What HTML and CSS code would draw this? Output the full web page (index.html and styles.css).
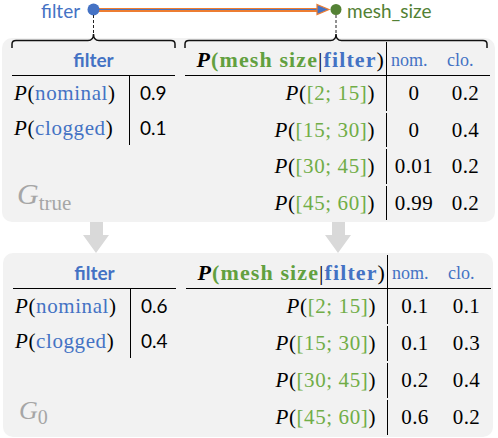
FILE: index.html
```html
<!DOCTYPE html>
<html>
<head>
<meta charset="utf-8">
<link rel="stylesheet" href="styles.css">
</head>
<body>
<div class="page">
  <div class="graph">
    <svg class="graph-svg" width="498" height="50" viewBox="0 0 498 50">
      <line x1="99" y1="10" x2="320" y2="10" stroke="#ed7d31" stroke-width="4"/>
      <line x1="99" y1="9.5" x2="320" y2="9.5" stroke="#4472c4" stroke-width="1.2"/>
      <path d="M317 4.5 L329 9.5 L317 14.5 Z" fill="#4472c4" stroke="#ed7d31" stroke-width="1.2"/>
      <circle cx="93.5" cy="9.5" r="6" fill="#4472c4"/>
      <circle cx="336" cy="9.5" r="5.5" fill="#548235"/>
      <line x1="93.5" y1="15" x2="93.5" y2="34" stroke="#222" stroke-width="1" stroke-dasharray="3 2"/>
      <line x1="336" y1="15" x2="336" y2="34" stroke="#222" stroke-width="1" stroke-dasharray="3 2"/>
      <path d="M12 48 L12 44 Q12 40.5 16 40.5 L88 40.5 Q93.5 40.5 93.5 34 Q93.5 40.5 99 40.5 L171 40.5 Q175 40.5 175 44 L175 48" fill="none" stroke="#111" stroke-width="1.5"/>
      <path d="M185 48 L185 44 Q185 40.5 189 40.5 L330.5 40.5 Q336 40.5 336 34 Q336 40.5 341.5 40.5 L483 40.5 Q487 40.5 487 44 L487 48" fill="none" stroke="#111" stroke-width="1.5"/>
    </svg>
    <span class="node-label node-filter">filter</span>
    <span class="node-label node-mesh">mesh_size</span>
  </div>

  <section class="panel">
    <div class="left">
      <div class="ltable">
        <div class="lhead">filter</div>
        <div class="k"><i>P</i>(<span class="b">nominal</span>)</div><div class="v">0.9</div>
        <div class="k"><i>P</i>(<span class="b">clogged</span>)</div><div class="v">0.1</div>
      </div>
      <div class="glabel"><i>G</i><span class="gsub">true</span></div>
    </div>
    <div class="rtable">
      <div class="rh rh-main"><b><i>P</i></b><b class="gh">(mesh size</b>|<b class="b">filter</b>)</div>
      <div class="rh rh-nom">nom.</div>
      <div class="rh rh-clo">clo.</div>
      <div class="rk"><i>P</i>(<span class="g">[2; 15]</span>)</div><div class="rv">0</div><div class="rv">0.2</div>
      <div class="rk"><i>P</i>(<span class="g">[15; 30]</span>)</div><div class="rv">0</div><div class="rv">0.4</div>
      <div class="rk"><i>P</i>(<span class="g">[30; 45]</span>)</div><div class="rv">0.01</div><div class="rv">0.2</div>
      <div class="rk"><i>P</i>(<span class="g">[45; 60]</span>)</div><div class="rv">0.99</div><div class="rv">0.2</div>
    </div>
  </section>

  <div class="arrows">
    <svg class="down" width="26" height="31" viewBox="0 0 26 31"><path d="M7 0 H20 V13 H26 L13 31 L0 13 H7 Z" fill="#d9d9d9"/></svg>
    <svg class="down" width="26" height="31" viewBox="0 0 26 31"><path d="M7 0 H20 V13 H26 L13 31 L0 13 H7 Z" fill="#d9d9d9"/></svg>
  </div>

  <section class="panel panel-b">
    <div class="left">
      <div class="ltable">
        <div class="lhead">filter</div>
        <div class="k"><i>P</i>(<span class="b">nominal</span>)</div><div class="v">0.6</div>
        <div class="k"><i>P</i>(<span class="b">clogged</span>)</div><div class="v">0.4</div>
      </div>
      <div class="glabel g0"><i>G</i><span class="gsub">0</span></div>
    </div>
    <div class="rtable">
      <div class="rh rh-main"><b><i>P</i></b><b class="gh">(mesh size</b>|<b class="b">filter</b>)</div>
      <div class="rh rh-nom">nom.</div>
      <div class="rh rh-clo">clo.</div>
      <div class="rk"><i>P</i>(<span class="g">[2; 15]</span>)</div><div class="rv">0.1</div><div class="rv">0.1</div>
      <div class="rk"><i>P</i>(<span class="g">[15; 30]</span>)</div><div class="rv">0.1</div><div class="rv">0.3</div>
      <div class="rk"><i>P</i>(<span class="g">[30; 45]</span>)</div><div class="rv">0.2</div><div class="rv">0.4</div>
      <div class="rk"><i>P</i>(<span class="g">[45; 60]</span>)</div><div class="rv">0.6</div><div class="rv">0.2</div>
    </div>
  </section>
</div>
</body>
</html>
```

FILE: styles.css
```css
* { box-sizing: border-box; }
html, body { margin: 0; padding: 0; background: #ffffff; }
.page { width: 498px; height: 438px; overflow: hidden; }

.graph { position: relative; height: 38px; z-index: 2; }
.graph-svg { position: absolute; left: 0; top: 0; overflow: visible; }
.node-label {
  position: absolute;
  top: 0;
  font-family: Lato, "Liberation Sans", sans-serif;
  font-size: 19px;
  line-height: 22px;
  white-space: nowrap;
}
.node-filter { left: 41px; color: #4472c4; }
.node-mesh { left: 347px; color: #538135; }

.panel {
  background: #f2f2f2;
  border-radius: 10px;
  margin: 0 3px 0 2px;
  height: 184px;
  display: flex;
  gap: 10px;
  padding: 4px 5px 0 10px;
}
.panel-b { margin: 0 5px 0 3px; padding-top: 2px; }

.left { width: 163px; display: flex; flex-direction: column; }
.ltable { display: grid; grid-template-columns: 118px 45px; }
.lhead {
  grid-column: 1 / 3;
  height: 34px;
  border-bottom: 1.5px solid #000;
  font-family: Lato, "Liberation Sans", sans-serif;
  font-weight: bold;
  font-size: 19px;
  color: #4472c4;
  text-align: center;
  line-height: 36px;
}
.k {
  font-family: "Liberation Serif", serif;
  font-size: 21px;
  letter-spacing: 0.6px;
  height: 34.5px;
  line-height: 34.5px;
  padding-left: 2px;
  border-right: 1.5px solid #000;
  color: #000;
  white-space: nowrap;
}
.v {
  font-family: Lato, "Liberation Sans", sans-serif;
  font-size: 19px;
  line-height: 34.5px;
  padding-left: 10px;
  color: #000;
}
.b { color: #4472c4; }
.g { color: #70ad47; }
.gh { color: #62a03f; }

.glabel {
  margin-top: auto;
  margin-bottom: 10px;
  padding-left: 5px;
  font-family: "Liberation Serif", serif;
  color: #a6a6a6;
  font-size: 30px;
  line-height: 30px;
}
.gsub { font-size: 21px; position: relative; top: 6px; }
.g0 { margin-bottom: 10px; padding-left: 6px; font-size: 26px; }
.g0 .gsub { font-size: 20px; top: 5px; }

.rtable { display: grid; grid-template-columns: 202px 54px 49px; grid-template-rows: 34px; }
.rh {
  height: 34px;
  border-bottom: 1.5px solid #000;
  font-family: "Liberation Serif", serif;
  line-height: 36px;
  white-space: nowrap;
}
.rh-main {
  text-align: right;
  padding-right: 1px;
  font-size: 22px;
  letter-spacing: 1.1px;
  border-right: 1.5px solid #000;
}
.rh-nom, .rh-clo { color: #4472c4; font-size: 18px; }
.rh-nom { padding-left: 4px; }
.rh-clo { padding-left: 6px; }
.rk {
  font-family: "Liberation Serif", serif;
  font-size: 21px;
  letter-spacing: 0.6px;
  height: 34.5px;
  line-height: 34.5px;
  text-align: right;
  padding-right: 11px;
  border-right: 1.5px solid #000;
  white-space: nowrap;
}
.rv {
  font-family: "Liberation Serif", serif;
  font-size: 21px;
  letter-spacing: 0.4px;
  line-height: 34.5px;
  text-align: center;
}

.arrows { height: 31px; display: flex; padding-left: 83px; gap: 216px; }
.down { display: block; }
```
